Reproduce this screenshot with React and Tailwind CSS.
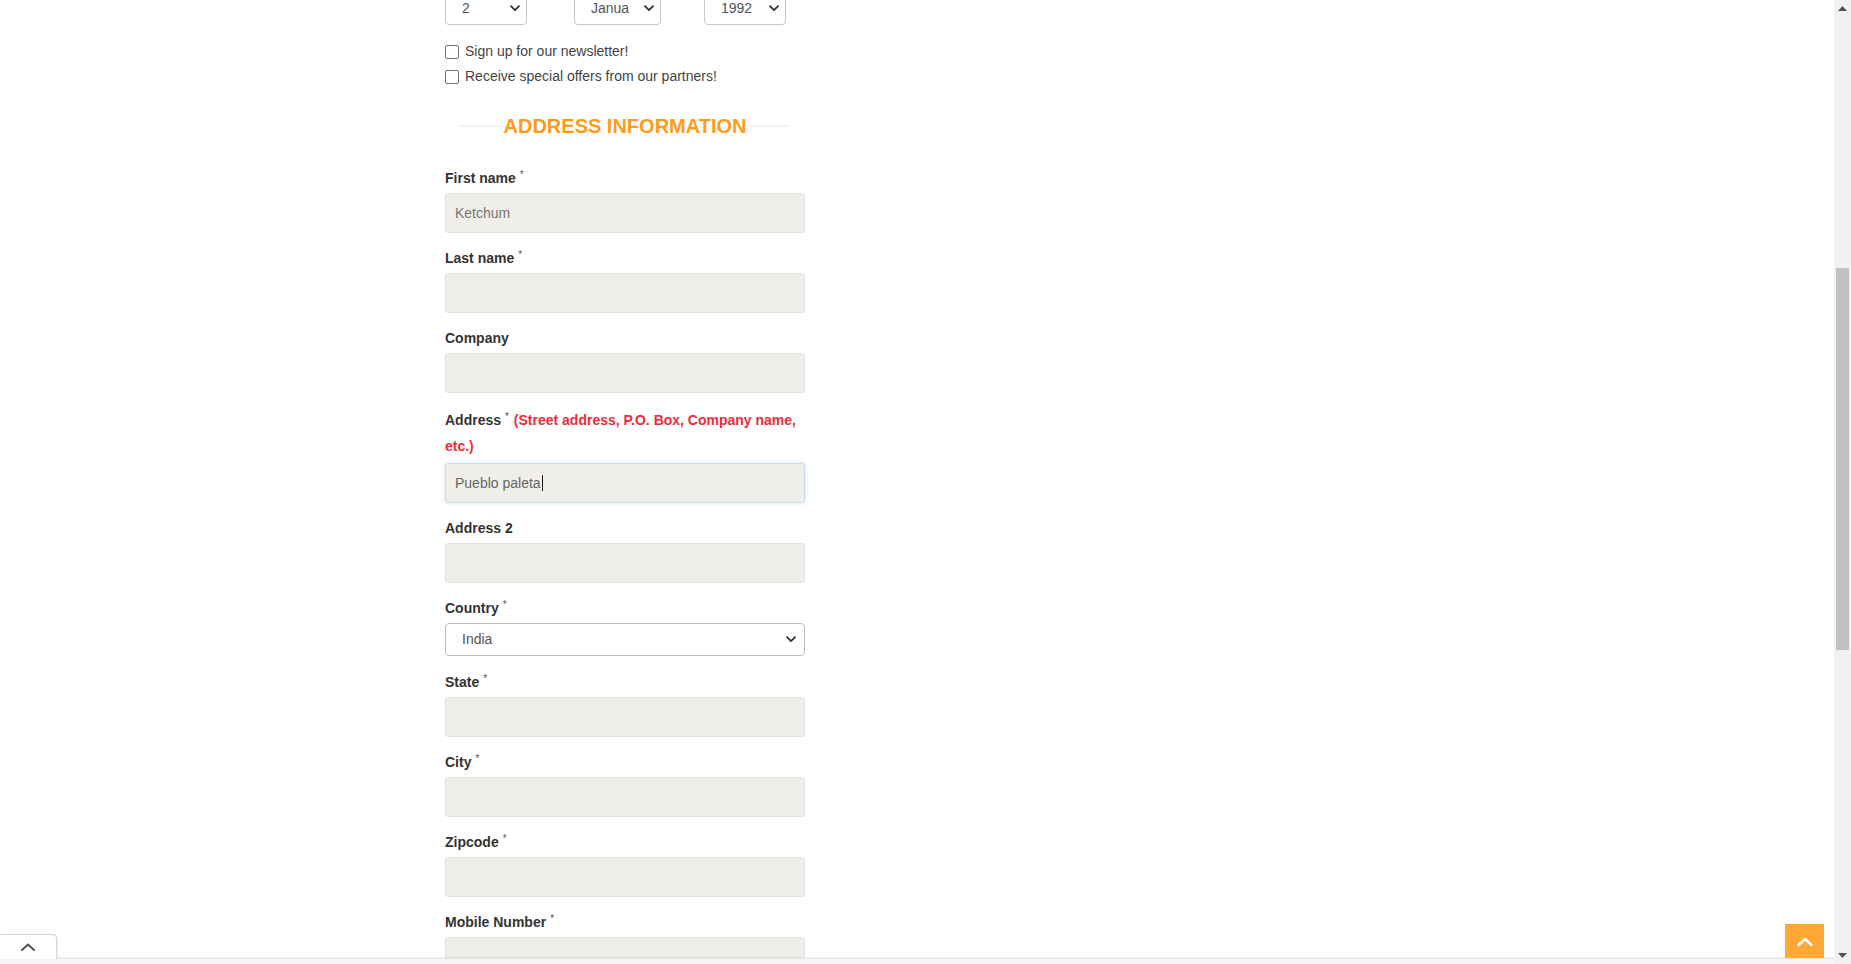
import React from "react";

const font = { fontFamily: '"Liberation Sans", Arial, sans-serif' };

function Chevron({ className = "" }) {
  return (
    <svg className={className} width="10" height="7" viewBox="0 0 10 7" fill="none">
      <path d="M1 1.2 L5 5.2 L9 1.2" stroke="#333" strokeWidth="1.8" strokeLinecap="round" strokeLinejoin="round" />
    </svg>
  );
}

function MiniSelect({ value, width, textColor = "#555" }) {
  return (
    <div
      className={`flex h-[33px] items-center justify-between rounded-[4px] border border-[#c8c8c8] bg-white pl-[16px] pr-[6px] ${width}`}
    >
      <span className="overflow-hidden whitespace-nowrap text-[14px]" style={{ color: textColor }}>
        {value}
      </span>
      <Chevron />
    </div>
  );
}

function Label({ children, req = true }) {
  return (
    <div className="text-[14px] font-bold leading-[26px] text-[#333]">
      {children}
      {req && <sup className="ml-[4px] text-[10px] font-normal text-[#555]">*</sup>}
    </div>
  );
}

function Field({ label, value, req = true }) {
  return (
    <div className="mb-[12px]">
      <Label req={req}>{label}</Label>
      <div className="mt-[2px] flex h-[40px] items-center rounded-[3px] border border-[#e4e3dc] bg-[#efeee8] px-[9px] text-[14px] text-[#777]">
        {value}
      </div>
    </div>
  );
}

export default function App() {
  return (
    <div className="relative flex h-[964px] w-[1851px] overflow-hidden bg-white" style={font}>
      <div className="relative flex-1 overflow-hidden">
        <div className="ml-[445px] mt-[-8px] w-[360px]">
          {/* date of birth selects */}
          <div className="flex h-[33px]">
            <MiniSelect value="2" width="w-[82px]" />
            <div className="ml-[47px]">
              <MiniSelect value="Janua" width="w-[87px]" />
            </div>
            <div className="ml-[43px]">
              <MiniSelect value="1992" width="w-[82px]" textColor="#4a5570" />
            </div>
          </div>

          {/* checkboxes */}
          <div className="mt-[14px]">
            <label className="flex h-[25px] items-center text-[14px] text-[#444]">
              <span className="mr-[6px] box-border h-[14px] w-[14px] rounded-[2px] border border-[#767676] bg-white" />
              Sign up for our newsletter!
            </label>
            <label className="flex h-[25px] items-center text-[14px] text-[#444]">
              <span className="mr-[6px] box-border h-[14px] w-[14px] rounded-[2px] border border-[#767676] bg-white" />
              Receive special offers from our partners!
            </label>
          </div>

          {/* heading */}
          <div className="mx-[15px] mt-[25px] flex h-[24px] items-center">
            <div className="h-[2px] flex-1 bg-[#f2f2f2]" />
            <h2 className="text-[20px] font-bold leading-[24px] text-[#ff9b17]">ADDRESS INFORMATION</h2>
            <div className="h-[2px] flex-1 bg-[#f2f2f2]" />
          </div>

          <div className="mt-[27px]">
            <Field label="First name" value="Ketchum" />
            <Field label="Last name" value="" />
            <Field label="Company" value="" req={false} />

            {/* address */}
            <div className="mb-[12px]">
              <div className="pt-[2px] text-[14px] font-bold leading-[26px] text-[#333]">
                Address
                <sup className="ml-[4px] mr-[1px] text-[10px] font-normal text-[#555]">*</sup>{" "}
                <span className="text-[#ee2b3b]">(Street address, P.O. Box, Company name, etc.)</span>
              </div>
              <div className="mt-[4px] flex h-[40px] items-center rounded-[3px] border border-[#c9ddf0] bg-[#efeee8] px-[9px] text-[14px] text-[#666] shadow-[0_0_4px_rgba(102,175,233,0.35)]">
                Pueblo paleta
                <span className="ml-[1px] inline-block h-[16px] w-[1px] bg-[#222]" />
              </div>
            </div>

            <Field label="Address 2" value="" req={false} />

            {/* country */}
            <div className="mb-[13px]">
              <Label>Country</Label>
              <div className="mt-[2px] flex h-[33px] items-center justify-between rounded-[4px] border border-[#bdbdbd] bg-white pl-[16px] pr-[8px] text-[14px] text-[#555]">
                <span>India</span>
                <Chevron />
              </div>
            </div>

            <Field label="State" value="" />
            <Field label="City" value="" />
            <Field label="Zipcode" value="" />
            <Field label="Mobile Number" value="" />
          </div>
        </div>

        {/* fixed bottom bar */}
        <div className="absolute bottom-0 left-0 right-0 h-[6px] border-t border-[#e6e6e6] bg-[#f6f6f6] shadow-[0_-1px_2px_rgba(0,0,0,0.06)]" />
        {/* bottom-left tab */}
        <div className="absolute bottom-[5px] left-0 flex h-[25px] w-[57px] items-center justify-center rounded-tr-[5px] border-r border-t border-[#d6d6d6] bg-white shadow-[1px_0_2px_rgba(0,0,0,0.08)]">
          <svg width="16" height="10" viewBox="0 0 16 10" fill="none">
            <path d="M2 8 L8 2.5 L14 8" stroke="#555" strokeWidth="2" strokeLinecap="round" strokeLinejoin="round" />
          </svg>
        </div>
        {/* scroll to top */}
        <div className="absolute bottom-[6px] right-[10px] flex h-[34px] w-[39px] items-center justify-center bg-[#ffa934]">
          <svg width="18" height="11" viewBox="0 0 18 11" fill="none">
            <path d="M2.5 9 L9 3 L15.5 9" stroke="#fff" strokeWidth="2.6" strokeLinecap="round" strokeLinejoin="round" />
          </svg>
        </div>
      </div>

      {/* scrollbar */}
      <div className="flex h-full w-[17px] flex-col bg-[#f1f1f1]">
        <div className="flex h-[17px] items-center justify-center">
          <svg width="9" height="5" viewBox="0 0 9 5">
            <path d="M0 5 L4.5 0 L9 5 Z" fill="#505050" />
          </svg>
        </div>
        <div className="mt-[251px] mx-[2px] h-[382px] bg-[#c1c1c1]" />
        <div className="flex-1" />
        <div className="flex h-[17px] items-center justify-center">
          <svg width="9" height="5" viewBox="0 0 9 5">
            <path d="M0 0 L4.5 5 L9 0 Z" fill="#505050" />
          </svg>
        </div>
      </div>
    </div>
  );
}
